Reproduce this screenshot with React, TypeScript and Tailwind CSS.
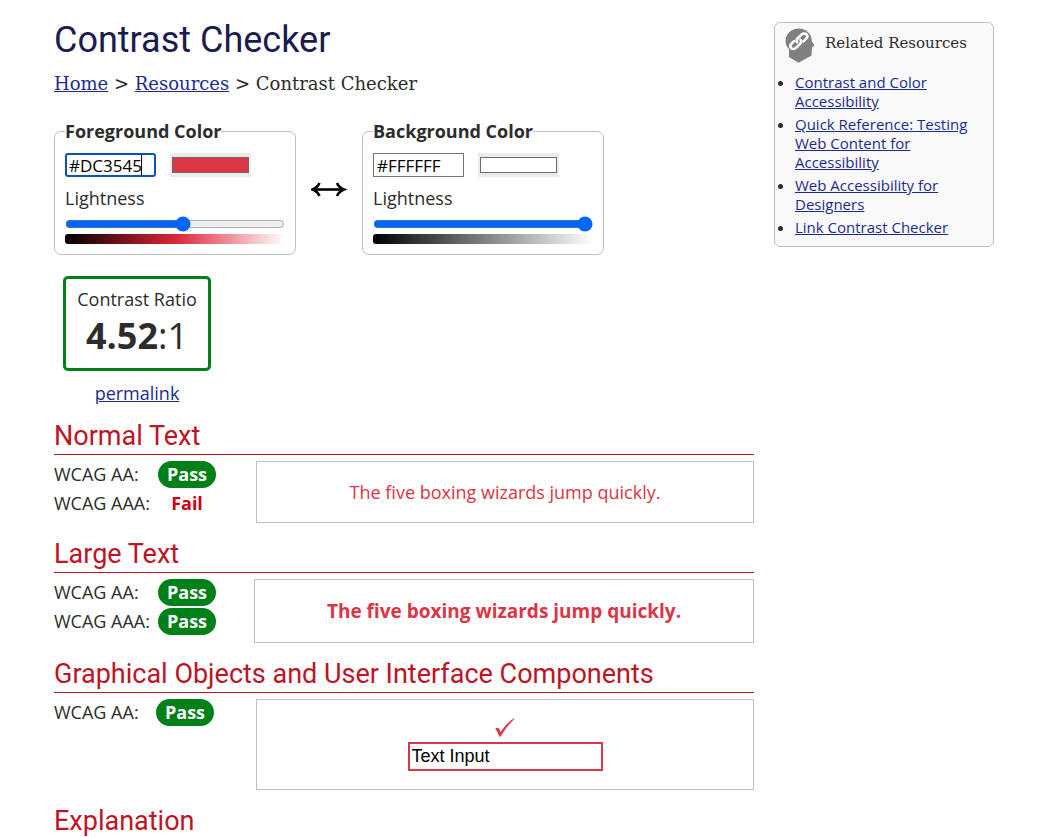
import { useId, useState } from "react";
import type { ReactNode } from "react";

const link = "text-[#1c2b92] underline";
const slab = "font-['DejaVu_Serif',serif]";

type PickerProps = {
  title: string;
  initial: string;
  lightness: number;
  active?: boolean;
  gradient: string;
};

function ColorPicker({ title, initial, lightness, active, gradient }: PickerProps) {
  const id = useId();
  const [hex, setHex] = useState(initial);
  const [level, setLevel] = useState(lightness);
  return (
    <fieldset className="w-[242px] rounded-[7px] border border-[#c0c0c0] px-2.5 pb-2.5">
      <legend className="text-lg leading-6 font-bold">{title}</legend>
      <div className="mt-2.5 flex gap-3.5">
        <div className="relative">
          <input
            type="text"
            aria-label={`${title} value`}
            value={hex}
            onChange={(e) => setHex(e.target.value)}
            className={
              active
                ? "block h-6 w-[91px] rounded-[3px] border-2 border-[#0a50c0] bg-white px-0.5 text-[17px] leading-5 text-black outline-none"
                : "block h-6 w-[91px] border border-[#767676] bg-white px-[3px] text-[17px] leading-5 text-black outline-none"
            }
          />
          {active && <span aria-hidden="true" className="absolute top-0.5 left-[76px] h-5 w-px bg-black" />}
        </div>
        <input
          type="color"
          aria-label={`${title} picker`}
          value={/^#[0-9a-f]{6}$/i.test(hex) ? hex.toLowerCase() : "#000000"}
          onChange={(e) => setHex(e.target.value.toUpperCase())}
          className="block h-6 w-[81px] appearance-none bg-[#ebebeb] px-0.5 py-1 [&::-webkit-color-swatch]:rounded-none [&::-webkit-color-swatch]:border [&::-webkit-color-swatch]:border-[#6b6b6b] [&::-webkit-color-swatch-wrapper]:p-0"
        />
      </div>
      <label htmlFor={id} className="mt-[9px] block text-lg leading-6">
        Lightness
      </label>
      <input
        id={id}
        type="range"
        min={0}
        max={100}
        value={level}
        onChange={(e) => setLevel(Number(e.target.value))}
        className="mt-1.5 block h-4 w-full accent-[#0366ff]"
      />
      <div className={`mt-0.5 h-2.5 rounded-[3px] ${gradient}`} />
    </fieldset>
  );
}

function Result({ level, pass, labelWidth = "w-[104px]" }: { level: string; pass: boolean; labelWidth?: string }) {
  return (
    <div className="flex h-[27px] items-center">
      <dt className={labelWidth}>{level}:</dt>
      <dd
        className={
          pass
            ? "w-[58px] rounded-full bg-[#008018] text-center leading-[27px] font-bold text-white"
            : "w-[58px] text-center leading-[27px] font-bold text-[#cc0011]"
        }
      >
        {pass ? "Pass" : "Fail"}
      </dd>
    </div>
  );
}

type SectionProps = { title: string; results: ReactNode; children: ReactNode; resultsWidth?: string };

function Section({ title, results, children, resultsWidth = "w-[202px]" }: SectionProps) {
  return (
    <section className="mb-[18px]">
      <Heading>{title}</Heading>
      <div className="mt-1.5 flex">
        <dl className={`flex shrink-0 flex-col gap-0.5 text-lg leading-[27px] ${resultsWidth}`}>{results}</dl>
        {children}
      </div>
    </section>
  );
}

function Heading({ children }: { children: ReactNode }) {
  return (
    <h2 className="border-b border-current pb-[5px] font-[Roboto,sans-serif] text-[27px] leading-[26px] text-[#be1425]">
      {children}
    </h2>
  );
}

const resources = [
  "Contrast and Color Accessibility",
  "Quick Reference: Testing Web Content for Accessibility",
  "Web Accessibility for Designers",
  "Link Contrast Checker",
];

function RelatedResources() {
  return (
    <aside className="w-[220px] shrink-0 rounded-md border border-[#c0c0c0] bg-[#f9f9f9] pr-4 pb-[9px] pl-2.5">
      <div className="flex h-[50px] items-start gap-2.5 pt-[5px]">
        <svg viewBox="0 0 30 36" className="h-9 w-[30px]" aria-hidden="true">
          <path
            d="M14 .6C6.500.6.6 6 .6 13c0 3.600.9 5.800 3.400 8L4 29 13.500 34.800 26.600 27.600 26.800 20.500 27.600 19 29.600 17.600 26.900 13.500C26.900 6 21 .6 14 .6Z"
            fill="#808080"
          />
          <g fill="none" stroke="#fff" strokeWidth="2.500" strokeLinecap="round">
            <path d="M12.200 14.300c-1-1.300-.8-2.900.5-4.100l4-3.700c1.500-1.400 3.600-1.400 4.800-.1s1 3.100-.4 4.500l-2.600 2.500" />
            <path d="M15.300 11.700c1.200 1.300 1.100 3-.2 4.200l-4.200 4c-1.500 1.400-3.500 1.500-4.700.2s-1.100-3.200.4-4.600l2.500-2.300" />
          </g>
        </svg>
        <h2 className={`${slab} text-[15px] leading-[31px]`}>Related Resources</h2>
      </div>
      <ul className="list-disc space-y-1 pl-2.5 text-[15px] leading-[19px]">
        {resources.map((r) => (
          <li key={r}>
            <a href="#" className={link}>
              {r}
            </a>
          </li>
        ))}
      </ul>
    </aside>
  );
}

export default function App() {
  return (
    <div className="flex items-start gap-5 bg-white pt-[22px] pr-[43px] pl-[54px] font-['Open_Sans',sans-serif] text-[#2c2c2c]">
      <main className="min-w-0 flex-1">
        <h1 className="font-[Roboto,sans-serif] text-4xl leading-9 text-[#1b1b50]">Contrast Checker</h1>
        <nav aria-label="Breadcrumb" className={`${slab} mt-3.5 text-lg leading-6`}>
          <a href="#" className={link}>
            Home
          </a>
          {" > "}
          <a href="#" className={link}>
            Resources
          </a>
          {" > Contrast Checker"}
        </nav>

        <div className="mt-[23px] flex items-center">
          <ColorPicker
            title="Foreground Color"
            initial="#DC3545"
            lightness={54}
            active
            gradient="bg-linear-to-r/srgb from-black via-[#dc2538] to-white"
          />
          <button type="button" aria-label="Swap colors" className="mx-[15px] h-6 w-9">
            <svg viewBox="0 0 36 24" className="h-6 w-9" fill="none" stroke="#000" aria-hidden="true">
              <path d="M2.500 14.500H32" strokeWidth="2.600" />
              <path
                d="M8.500 8C7 11.500 4.500 13.500 1.500 14.500C4.500 15.500 7 17.500 8.500 21M26 8C27.500 11.500 30 13.500 33 14.500C30 15.500 27.500 17.500 26 21"
                strokeWidth="2.600"
              />
            </svg>
          </button>
          <ColorPicker
            title="Background Color"
            initial="#FFFFFF"
            lightness={100}
            gradient="bg-linear-to-r/srgb from-black to-white"
          />
        </div>

        <div className="mt-[21px] ml-[9px] w-[148px] text-center">
          <div className="h-[95px] rounded-[5px] border-[3px] border-[#008018] pt-2 text-lg leading-6">
            Contrast Ratio
            <div className="text-4xl leading-[50px]">
              <b>4.52</b>:1
            </div>
          </div>
          <a href="#" className={`${link} mt-2.5 inline-block text-lg leading-6`}>
            permalink
          </a>
        </div>

        <div className="mt-[17px]">
          <Section
            title="Normal Text"
            results={
              <>
                <Result level="WCAG AA" pass />
                <Result level="WCAG AAA" pass={false} />
              </>
            }
          >
            <p className="flex h-[62px] flex-1 items-center justify-center border border-[#c0c0c0] text-lg text-[#dc3545]">
              The five boxing wizards jump quickly.
            </p>
          </Section>
          <Section
            title="Large Text"
            resultsWidth="w-[200px]"
            results={
              <>
                <Result level="WCAG AA" pass />
                <Result level="WCAG AAA" pass />
              </>
            }
          >
            <p className="flex h-16 flex-1 items-center justify-center border border-[#c0c0c0] text-[19px] font-bold text-[#dc3545]">
              The five boxing wizards jump quickly.
            </p>
          </Section>
          <Section
            title="Graphical Objects and User Interface Components"
            results={<Result level="WCAG AA" pass labelWidth="w-[102px]" />}
          >
            <div className="flex h-[91px] flex-1 flex-col items-center border border-[#c0c0c0] pt-[18px]">
              <svg viewBox="0 0 20 20" className="size-5" aria-hidden="true">
                <path
                  d="M.2 10.800Q2.500 9.200 3.800 10.200Q4.800 11.500 5.600 14C9.500 8 14 3.200 18.800.6L19.400 1C14.500 5.500 9.800 11.500 6.300 17.600Q5.500 18.600 4.400 18.900Q3.300 14 .2 10.800Z"
                  fill="#dc3545"
                />
              </svg>
              <input
                type="text"
                aria-label="Sample text input"
                defaultValue="Text Input"
                className="mt-1 h-[29px] w-[195px] border-2 border-[#dc3545] bg-white px-0.5 font-['Liberation_Sans',sans-serif] text-lg leading-5 text-black"
              />
            </div>
          </Section>
          <Heading>Explanation</Heading>
        </div>
      </main>
      <RelatedResources />
    </div>
  );
}
